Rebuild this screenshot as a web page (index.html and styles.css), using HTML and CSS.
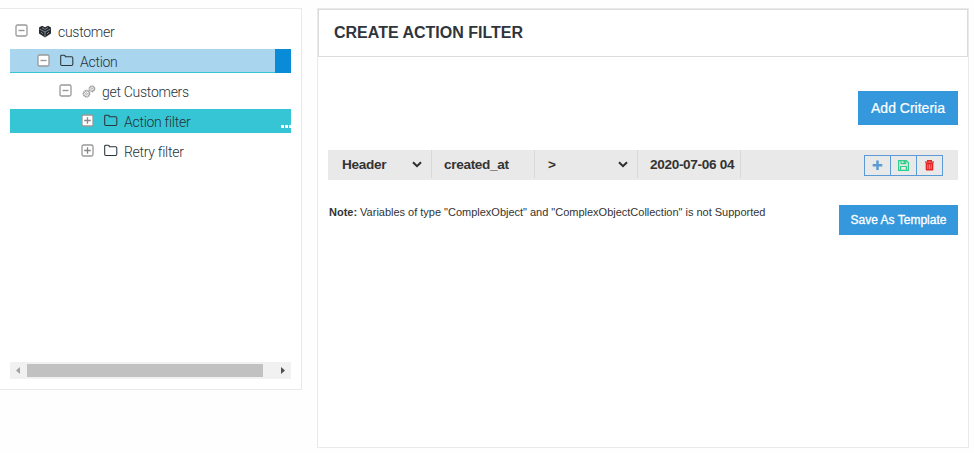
FILE: index.html
```html
<!DOCTYPE html>
<html lang="en">
<head>
<meta charset="utf-8">
<title>Create Action Filter</title>
<link rel="stylesheet" href="styles.css">
</head>
<body>
<svg class="defs" width="0" height="0">
  <symbol id="minus" viewBox="0 0 13 13"><rect x="1" y="1" width="11" height="11" rx="1.5" fill="#fff" stroke="#999" stroke-width="1.3"/><path d="M3.5 6.5h6" stroke="#999" stroke-width="1.4"/></symbol>
  <symbol id="plus" viewBox="0 0 13 13"><rect x="1" y="1" width="11" height="11" rx="1.5" fill="#fff" stroke="#999" stroke-width="1.3"/><path d="M3.2 6.5h6.6M6.500 3.200v6.600" stroke="#888" stroke-width="1.3"/></symbol>
  <symbol id="folder" viewBox="0 0 14 13"><path d="M.7 10.300V2.200Q.7 1.200 1.700 1.200h2.600q1 0 1 1v.5h6.300q1.200 0 1.200 1.200v6.400q0 1.200-1.200 1.200H1.900Q.7 11.500 .7 10.300Z" fill="none" stroke="#2b353a" stroke-width="1.05"/></symbol>
  <symbol id="chevron" viewBox="0 0 10 7"><path d="M1 1.200 5 5.200 9 1.200" fill="none" stroke="#2d2d2d" stroke-width="2"/></symbol>
</svg>
<main class="page">
  <aside class="sidebar">
    <ul class="tree">
      <li class="node"><svg class="toggle"><use href="#minus"/></svg>
        <svg class="icon cube" viewBox="0 0 14 13"><path d="M1 2.500 4 .7l3 1.500L10 .7l3 1.800v6L7 12.500 1 8.500Z" fill="#252a30"/><path d="m1.500 4 5.500 3 5.500-3M7 7v5M4 2.500l3 2 3-2M3 7l2 2M9 9l2-2" fill="none" stroke="#a5a9ad" stroke-width=".7"/></svg>
        <span class="label">customer</span></li>
      <li class="node level-1 active"><svg class="toggle"><use href="#minus"/></svg><svg class="icon"><use href="#folder"/></svg><span class="label">Action</span><i class="handle"></i></li>
      <li class="node level-2"><svg class="toggle"><use href="#minus"/></svg>
        <svg class="icon gears" viewBox="0 0 14 13"><g fill="none" stroke="#999"><circle cx="4.500" cy="8.700" r="3" stroke-width="1.700" stroke-dasharray="1.300 .4"/><circle cx="4.500" cy="8.700" r="1" stroke-width=".8"/><circle cx="10" cy="3.800" r="2.500" stroke-width="1.700" stroke-dasharray="1.100 .3"/><circle cx="10" cy="3.800" r=".6" stroke-width=".7"/></g></svg>
        <span class="label">get Customers</span></li>
      <li class="node level-3 selected"><svg class="toggle"><use href="#plus"/></svg><svg class="icon"><use href="#folder"/></svg><span class="label">Action filter</span><i class="dots"><b></b><b></b><b></b></i></li>
      <li class="node level-3"><svg class="toggle"><use href="#plus"/></svg><svg class="icon"><use href="#folder"/></svg><span class="label">Retry filter</span></li>
    </ul>
    <div class="scrollbar">
      <svg class="arrow" viewBox="0 0 17 17"><path d="M10 5v7L6 8.500Z" fill="#a3a3a3"/></svg>
      <div class="thumb"></div>
      <svg class="arrow end" viewBox="0 0 17 17"><path d="M7 5v7l4-3.500Z" fill="#505050"/></svg>
    </div>
  </aside>
  <section class="panel">
    <h1 class="title"><span>CREATE ACTION FILTER</span></h1>
    <div class="content">
      <button class="button add">Add Criteria</button>
      <div class="criteria">
        <div class="field header"><span>Header</span><svg class="chevron"><use href="#chevron"/></svg></div>
        <div class="field name"><span>created_at</span></div>
        <div class="field operator"><span>&gt;</span><svg class="chevron"><use href="#chevron"/></svg></div>
        <div class="field value"><span>2020-07-06 04</span></div>
        <div class="actions">
          <button class="action"><svg viewBox="0 0 11 11"><path d="M5.500 .5v9.500M.7 5.200h9.600" stroke="#5b9bd5" stroke-width="2.500"/></svg></button>
          <button class="action"><svg viewBox="0 0 11 11"><path d="M.6.6h7.800l2 2v7.800H.6ZM3 .6v3h4.800v-3M2.600 10.200V6.500h5.800v3.700" fill="none" stroke="#2fce8b" stroke-width="1.200"/><path d="M5.500 1h1.700v2H5.500Z" fill="#2fce8b"/></svg></button>
          <button class="action"><svg viewBox="0 0 11 11"><path d="M3.600 2V.7h3.800V2M1 2.200h9" fill="none" stroke="#e52222" stroke-width="1.200"/><path d="M1.700 3h7.600v6.600q0 1-1 1H2.700q-1 0-1-1Z" fill="#e52222"/><path d="M3.800 4.300v4.800M5.500 4.300v4.800M7.200 4.300v4.800" stroke="#f0a5a5" stroke-width=".7"/></svg></button>
        </div>
      </div>
      <div class="footer">
        <p class="note"><strong>Note:</strong> Variables of type "ComplexObject" and "ComplexObjectCollection" is not Supported</p>
        <button class="button save">Save As Template</button>
      </div>
    </div>
  </section>
</main>
</body>
</html>
```
FILE: styles.css
```css
* { box-sizing: border-box; }
body { margin: 0; background: #fefefe; font-family: "Liberation Sans", Arial, sans-serif; color: #333; }
button { font-family: inherit; margin: 0; padding: 0; border: 0; }
.defs { display: block; }
.page { display: flex; align-items: flex-start; gap: 15px; height: 453px; padding-top: 8px; overflow: hidden; }
.sidebar { display: flex; flex-direction: column; justify-content: space-between; width: 302px; height: 382px; padding: 10px; border: 1px solid #e7e9ea; border-left: 0; background: #fff; }
.tree { display: flex; flex-direction: column; gap: 6px; margin: 0; padding: 0; list-style: none; }
.node { display: flex; align-items: flex-start; height: 24px; padding-left: 5px; }
.level-1 { padding-left: 27px; }
.level-2 { padding-left: 49px; }
.level-3 { padding-left: 71px; }
.active { background: #a9d6ee; border-bottom: 1px solid #36c5d4; }
.selected { background: #36c5d4; }
.toggle { width: 13px; height: 13px; margin-top: 5px; flex: none; }
.icon { width: 14px; height: 13px; margin: 5px 6px 0 10px; flex: none; }
.cube, .gears { margin-top: 6px; }
.label { padding-top: 1px; font: 300 14px/24px Roboto, sans-serif; letter-spacing: -.28px; color: #263238; white-space: nowrap; }
.handle { width: 16px; height: 24px; margin: 0 0 -1px auto; background: #0a8bd8; }
.dots { display: flex; gap: 1px; align-self: flex-end; margin: 0 0 5px auto; }
.dots b { width: 3px; height: 3px; background: #fff; }
.dots b:last-child { width: 2px; }
.scrollbar { display: flex; align-items: center; height: 17px; background: #f1f1f1; }
.arrow { width: 17px; height: 17px; }
.thumb { width: 236px; height: 13px; background: #c1c1c1; }
.end { margin-left: auto; }
.panel { width: 652px; height: 440px; border: 1px solid #e7e9ea; background: #fff; }
.title { display: flex; align-items: center; height: 48px; margin: 0; padding: 0 15px; border: 1px solid #d9dbdd; font-size: 16px; color: #2f353b; }
.content { display: flex; flex-direction: column; padding: 34px 10px 0; }
.button { background: #3598dc; color: #fff; white-space: nowrap; }
.add { align-self: flex-end; width: 100px; height: 34px; font-size: 14px; -webkit-text-stroke: .2px #fff; }
.criteria { display: flex; height: 30px; margin-top: 25px; background: #e9e9e9; }
.field { display: flex; align-items: center; width: 103px; height: 28px; padding-left: 12px; border-right: 1px solid #d8d8d8; font-weight: bold; font-size: 13.6px; letter-spacing: -.33px; white-space: nowrap; }
.header { width: 104px; padding-left: 14px; }
.operator { padding-left: 13px; }
.chevron { width: 10px; height: 7px; margin: 0 9px 0 auto; }
.actions { display: flex; align-self: center; height: 21px; margin: 0 15px 0 auto; border: 1px solid #5b9bd5; }
.action { display: grid; place-items: center; width: 26px; background: transparent; border-right: 1px solid #5b9bd5; }
.action:last-child { width: 25px; border-right: 0; }
.action svg { width: 11px; height: 11px; }
.footer { display: flex; justify-content: space-between; align-items: flex-start; margin-top: 25px; }
.note { margin: 0 0 0 1px; font-size: 11px; line-height: 15px; letter-spacing: -.01px; white-space: nowrap; }
.save { width: 119px; height: 30px; font-size: 12px; -webkit-text-stroke: .3px #fff; }
```
